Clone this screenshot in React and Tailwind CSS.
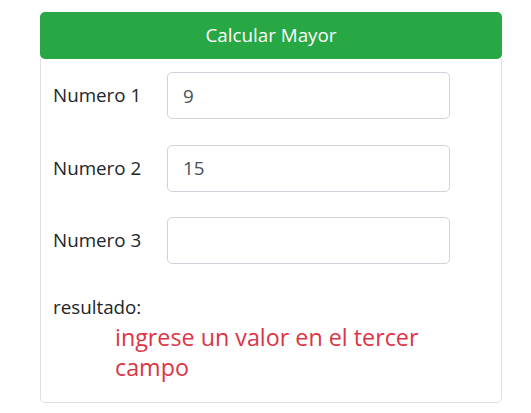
import { useState } from "react"

export default function App() {
  const [n1, setN1] = useState("9")
  const [n2, setN2] = useState("15")
  const [n3, setN3] = useState("")

  const font = { fontFamily: '"Open Sans", "Noto Sans", sans-serif' }

  return (
    <div className="min-h-[413px] bg-white pt-[12px]" style={font}>
      <div className="ml-[40px] w-[462px]">
        <button className="w-full h-[47px] rounded-[5px] bg-[#28a745] text-white text-[18.8px] leading-none">
          Calcular Mayor
        </button>
        <div className="border-x border-b border-[#dfdfdf] rounded-b-[5px] pl-[12px] pt-[13px] pb-[20px]">
          <div className="flex flex-col gap-[25.5px]">
            {[
              ["Numero 1", n1, setN1],
              ["Numero 2", n2, setN2],
              ["Numero 3", n3, setN3],
            ].map(([label, val, set]) => (
              <div key={label} className="flex items-center h-[47px]">
                <label className="w-[114px] text-[18.8px] text-[#212529]">{label}</label>
                <input
                  value={val}
                  onChange={(e) => set(e.target.value)}
                  className="w-[283px] h-[47px] border border-[#ced4da] rounded-[5px] px-[15px] text-[18.8px] text-[#495057] outline-none"
                />
              </div>
            ))}
          </div>
          <p className="mt-[28px] text-[18.8px] leading-[30px] text-[#212529]">resultado:</p>
          <p className="ml-[62px] mr-[50px] text-[23.3px] leading-[30px] text-[#dc3545]">
            ingrese un valor en el tercer campo
          </p>
        </div>
      </div>
    </div>
  )
}
